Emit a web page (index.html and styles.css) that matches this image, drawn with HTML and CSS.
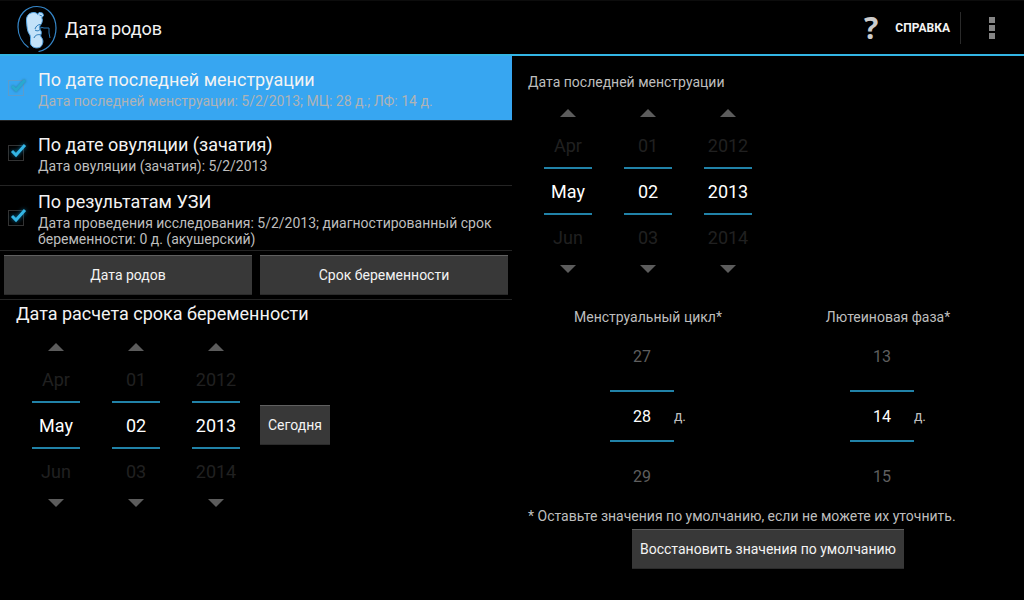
FILE: index.html
```html
<!DOCTYPE html>
<html lang="ru">
<head>
<meta charset="utf-8">
<meta name="viewport" content="width=device-width, initial-scale=1">
<title>Дата родов</title>
<link rel="stylesheet" href="styles.css">
</head>
<body>
<header class="bar">
  <svg class="logo" viewBox="0 0 42 48" aria-hidden="true">
    <path class="logo-ring" d="M12.500 43.500C6 39 2 31 2 23C2 11 10 2.500 21 2.500C32 2.500 40 12 40 24C40 36 33 46 22.500 47.500"/>
    <path class="logo-body" d="M10.500 17C10 11 14 8.500 18 8.500C21 8.500 22 11 24 12C27 14 27 18 24.500 21C22.500 23 23.500 25 25 27C26 30 24 31 25 33C28 36 27 40 25 42.500C22 45 17 44 15 41C13.500 38 15.500 35 14 31C11 28 11 22 10.500 17Z"/>
    <path class="logo-body" d="M21.500 11L23 8.500L26.500 9L27.500 11.500L25.500 14"/>
    <path class="logo-line" d="M23.500 11L26 12M24.500 20.500C22 20.500 20 22 19 25M19 26C22 28 24 26 25 24M18 34C19 31 22 30 25 31"/>
    <path class="logo-line" d="M24 23L28 24L33 24L33 29L34 34"/>
  </svg>
  <h1 class="bar-title">Дата родов</h1>
  <button class="help" type="button"><span class="help-mark" aria-hidden="true">?</span><span>СПРАВКА</span></button>
  <button class="menu" type="button" aria-label="Меню"><i></i><i></i><i></i></button>
</header>
<main class="panes">
  <section class="pane-left">
    <label class="method method-active">
      <span class="tick"><input type="checkbox" checked><svg viewBox="0 0 24 24" aria-hidden="true"><path d="M7 10L11 14L20 4"/></svg></span>
      <span class="method-text"><span class="method-name">По дате последней менструации</span><span class="method-info">Дата последней менструации: 5/2/2013; МЦ: 28 д.; ЛФ: 14 д.</span></span>
    </label>
    <label class="method">
      <span class="tick"><input type="checkbox" checked><svg viewBox="0 0 24 24" aria-hidden="true"><path d="M7 10L11 14L20 4"/></svg></span>
      <span class="method-text"><span class="method-name">По дате овуляции (зачатия)</span><span class="method-info">Дата овуляции (зачатия): 5/2/2013</span></span>
    </label>
    <label class="method">
      <span class="tick"><input type="checkbox" checked><svg viewBox="0 0 24 24" aria-hidden="true"><path d="M7 10L11 14L20 4"/></svg></span>
      <span class="method-text"><span class="method-name">По результатам УЗИ</span><span class="method-info">Дата проведения исследования: 5/2/2013; диагностированный срок беременности: 0 д. (акушерский)</span></span>
    </label>
    <div class="actions">
      <button class="btn" type="button">Дата родов</button>
      <button class="btn" type="button">Срок беременности</button>
    </div>
    <h2 class="heading">Дата расчета срока беременности</h2>
    <div class="calc">
      <div class="date">
        <div class="picker">
          <button class="arrow arrow-up" type="button" aria-label="Предыдущий месяц"></button>
          <button class="near near-prev" type="button">Apr</button>
          <input class="value" type="text" value="May" aria-label="Месяц">
          <button class="near" type="button">Jun</button>
          <button class="arrow arrow-down" type="button" aria-label="Следующий месяц"></button>
        </div>
        <div class="picker">
          <button class="arrow arrow-up" type="button" aria-label="Предыдущий день"></button>
          <button class="near near-prev" type="button">01</button>
          <input class="value" type="text" value="02" aria-label="День">
          <button class="near" type="button">03</button>
          <button class="arrow arrow-down" type="button" aria-label="Следующий день"></button>
        </div>
        <div class="picker">
          <button class="arrow arrow-up" type="button" aria-label="Предыдущий год"></button>
          <button class="near near-prev" type="button">2012</button>
          <input class="value" type="text" value="2013" aria-label="Год">
          <button class="near" type="button">2014</button>
          <button class="arrow arrow-down" type="button" aria-label="Следующий год"></button>
        </div>
      </div>
      <button class="btn" type="button">Сегодня</button>
    </div>
  </section>
  <section class="pane-right">
    <p class="caption">Дата последней менструации</p>
    <div class="date">
      <div class="picker">
        <button class="arrow arrow-up" type="button" aria-label="Предыдущий месяц"></button>
        <button class="near near-prev" type="button">Apr</button>
        <input class="value" type="text" value="May" aria-label="Месяц">
        <button class="near" type="button">Jun</button>
        <button class="arrow arrow-down" type="button" aria-label="Следующий месяц"></button>
      </div>
      <div class="picker">
        <button class="arrow arrow-up" type="button" aria-label="Предыдущий день"></button>
        <button class="near near-prev" type="button">01</button>
        <input class="value" type="text" value="02" aria-label="День">
        <button class="near" type="button">03</button>
        <button class="arrow arrow-down" type="button" aria-label="Следующий день"></button>
      </div>
      <div class="picker">
        <button class="arrow arrow-up" type="button" aria-label="Предыдущий год"></button>
        <button class="near near-prev" type="button">2012</button>
        <input class="value" type="text" value="2013" aria-label="Год">
        <button class="near" type="button">2014</button>
        <button class="arrow arrow-down" type="button" aria-label="Следующий год"></button>
      </div>
    </div>
    <div class="cycles">
      <div class="cycle">
        <label for="cycle">Менструальный цикл*</label>
        <div class="cycle-row">
          <div class="wheel">
            <button class="step step-prev" type="button">27</button>
            <input class="value" id="cycle" type="text" value="28">
            <button class="step step-next" type="button">29</button>
          </div>
          <span>д.</span>
        </div>
      </div>
      <div class="cycle">
        <label for="luteal">Лютеиновая фаза*</label>
        <div class="cycle-row">
          <div class="wheel">
            <button class="step step-prev" type="button">13</button>
            <input class="value" id="luteal" type="text" value="14">
            <button class="step step-next" type="button">15</button>
          </div>
          <span>д.</span>
        </div>
      </div>
    </div>
    <p class="note">* Оставьте значения по умолчанию, если не можете их уточнить.</p>
    <button class="btn btn-reset" type="button">Восстановить значения по умолчанию</button>
  </section>
</main>
</body>
</html>
```
FILE: styles.css
```css
* { box-sizing: border-box; }
body {
  margin: 0;
  background: #000;
  color: #bebebe;
  font: 14px/16px Roboto, "Noto Sans", sans-serif;
}
h1, h2, p { margin: 0; font-weight: 400; }
button, input {
  margin: 0;
  padding: 0;
  border: 0;
  border-radius: 0;
  background: none;
  color: inherit;
  font: inherit;
}
.bar {
  display: flex;
  align-items: center;
  height: 56px;
  padding-left: 16px;
  border-top: 1px solid #0c0c0c;
  border-bottom: 2px solid #33b5e5;
}
.logo { width: 42px; height: 48px; margin-right: 7px; fill: none; }
.logo-ring { stroke: #3586c8; stroke-width: 1.2; }
.logo-body { fill: #c3e2f9; stroke: #55a8e8; }
.logo-line { stroke: #2879b8; stroke-width: 1; }
.bar-title { flex: 1; padding-top: 2px; color: #f3f3f3; font-size: 18px; line-height: 24px; }
.help {
  display: flex;
  align-items: center;
  gap: 17px;
  height: 32px;
  padding-right: 10px;
  border-right: 1px solid #2a2a2a;
  color: #f3f3f3;
  font-size: 12px;
  font-weight: 700;
}
.help-mark { color: #ccc; font: 700 30px/32px "Open Sans", sans-serif; }
.menu {
  display: flex;
  flex-direction: column;
  align-items: center;
  gap: 2px;
  width: 62px;
  margin-right: 1px;
}
.menu i { width: 6px; height: 6px; background: #858585; }
.panes { display: grid; grid-template-columns: 1fr 1fr; }
.method {
  display: flex;
  align-items: center;
  min-height: 65px;
  padding: 0 8px 0 5px;
  border-bottom: 1px solid #242424;
}
.method-active { background: #37a6f1; }
.tick { display: grid; flex: none; width: 24px; height: 24px; margin-right: 9px; }
.tick input, .tick svg { grid-area: 1 / 1; }
.tick input {
  appearance: none;
  width: 16px;
  height: 16px;
  margin: 4px 3px;
  border: 1px solid #333;
}
.tick svg {
  width: 24px;
  height: 24px;
  fill: none;
  stroke: #33b5e5;
  stroke-width: 3;
  filter: drop-shadow(0 0 2px #0d6f9a);
  pointer-events: none;
}
.method-active .tick input { border-color: #5d9ccb; }
.method-active .tick svg { stroke: #29a9cf; filter: drop-shadow(0 0 1px #3279a6); }
.method-text { display: flex; flex-direction: column; }
.method-name { color: #f3f3f3; font-size: 18px; line-height: 24px; }
.method-info { padding-top: 1px; }
.method-active .method-info { color: #b0b3b5; }
.actions {
  display: grid;
  grid-template-columns: 1fr 1fr;
  gap: 8px;
  padding: 4px;
  border-bottom: 1px solid #242424;
}
.btn {
  height: 40px;
  padding: 0 8px;
  border-top: 1px solid #606060;
  border-bottom: 1px solid #2b2b2b;
  background: #383838;
  color: #f3f3f3;
  white-space: nowrap;
}
.heading { padding: 2px 16px; color: #f3f3f3; font-size: 18px; line-height: 24px; }
.calc { display: flex; align-items: center; gap: 20px; padding: 10px 32px; }
.date { display: flex; gap: 32px; }
.picker { display: flex; flex-direction: column; width: 48px; font-size: 18px; }
.arrow { display: flex; align-items: center; justify-content: center; }
.arrow-up { height: 20px; padding-bottom: 2px; }
.arrow-down { height: 16px; }
.arrow::before { content: ""; width: 16px; height: 8px; background: #5c5c5c; }
.arrow-up::before { clip-path: polygon(50% 0, 100% 100%, 0 100%); }
.arrow-down::before { clip-path: polygon(0 0, 100% 0, 50% 100%); }
.near { height: 46px; color: #202020; }
.near-prev { height: 43px; }
.value {
  width: 100%;
  height: 48px;
  border-top: 2px solid #2182a8;
  border-bottom: 2px solid #2182a8;
  color: #fff;
  text-align: center;
}
.pane-right { display: flex; flex-direction: column; padding: 18px 16px; }
.caption { margin-bottom: 14px; }
.pane-right .date { padding: 0 16px; }
.cycles { display: grid; grid-template-columns: 1fr 1fr; margin-top: 32px; }
.cycle { display: flex; flex-direction: column; align-items: center; gap: 1px; }
.cycle-row { display: flex; align-items: center; }
.wheel { display: flex; flex-direction: column; width: 64px; font-size: 16px; }
.wheel .value { height: 52px; }
.step { height: 64px; color: #5e5e5e; }
.step-prev { padding-bottom: 2px; }
.step-next { padding-top: 6px; }
.note { margin: 2px 0 5px; }
.btn-reset { align-self: center; }
```
